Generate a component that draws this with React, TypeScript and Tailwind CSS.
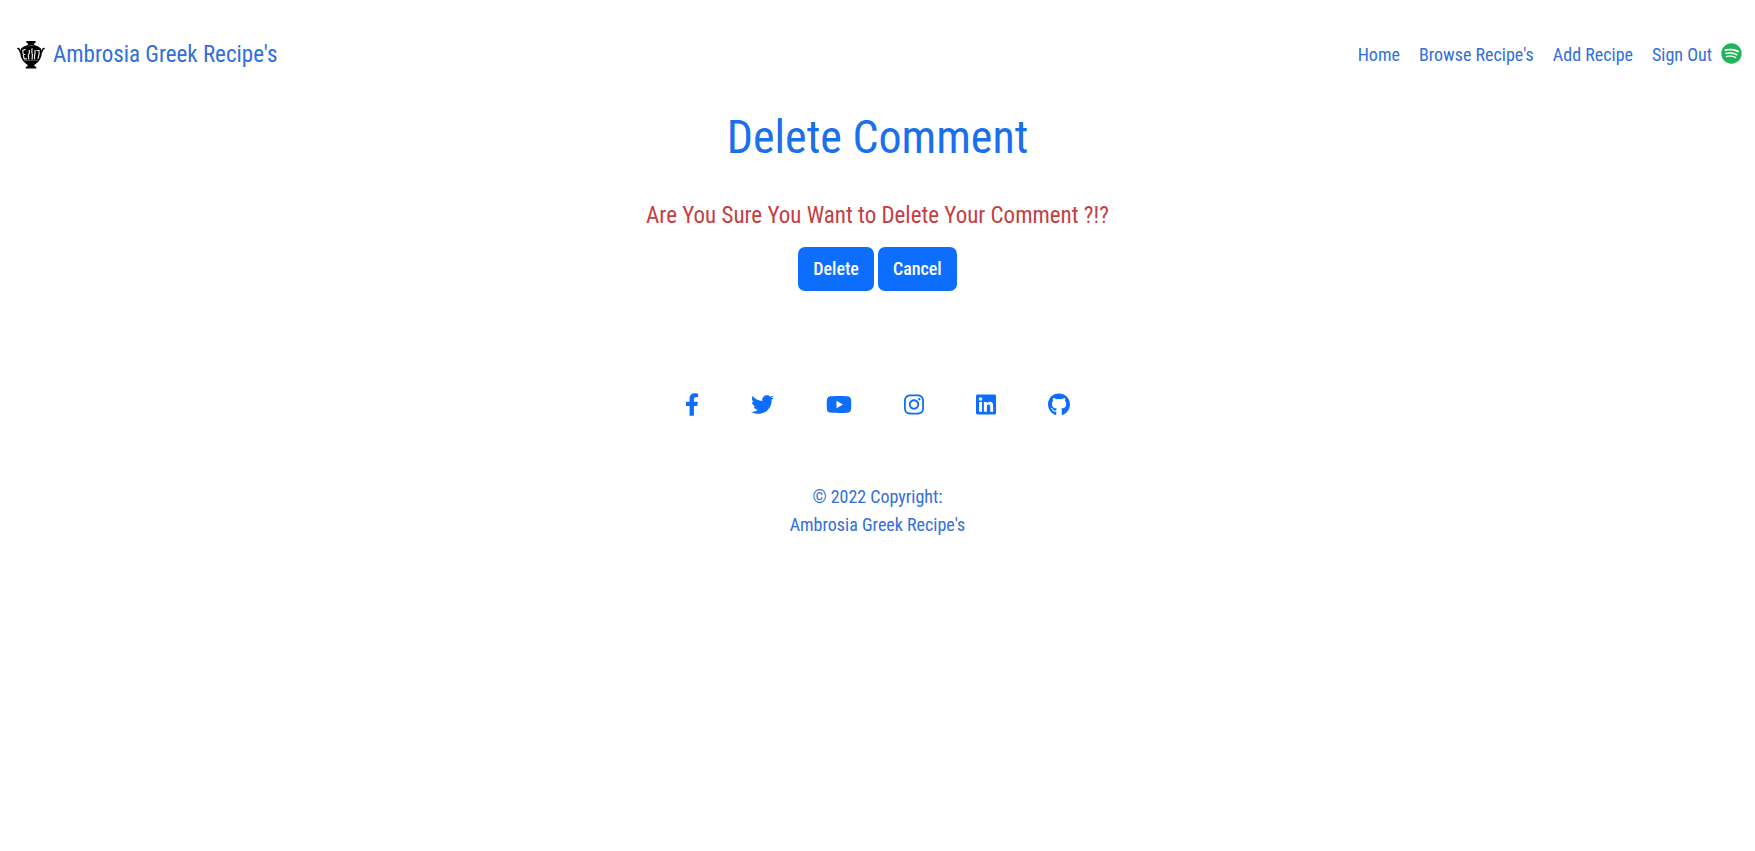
import type { IconType } from 'react-icons';
import {
  FaFacebookF,
  FaGithub,
  FaInstagram,
  FaLinkedin,
  FaSpotify,
  FaTwitter,
  FaYoutube,
} from 'react-icons/fa';

const navLinks = ['Home', "Browse Recipe's", 'Add Recipe'];

const socialLinks: { name: string; Icon: IconType; width: string }[] = [
  { name: 'Facebook', Icon: FaFacebookF, width: 'w-[14px]' },
  { name: 'Twitter', Icon: FaTwitter, width: 'w-[23px]' },
  { name: 'YouTube', Icon: FaYoutube, width: 'w-[26px]' },
  { name: 'Instagram', Icon: FaInstagram, width: 'w-[20px]' },
  { name: 'LinkedIn', Icon: FaLinkedin, width: 'w-[20px]' },
  { name: 'GitHub', Icon: FaGithub, width: 'w-[22px]' },
];

function AmphoraLogo() {
  return (
    <svg viewBox="0 1 28 28" className="size-7" aria-hidden="true">
      {/* handles */}
      <path
        fill="none"
        stroke="#000"
        strokeWidth="1.5"
        strokeLinecap="round"
        d="M.9 8.600c.9-.2 1.300.5 1.500 1.400.3 1.600 1.300 2.700 3.200 3.200M27.100 8.600c-.9-.2-1.300.5-1.500 1.400-.3 1.600-1.300 2.700-3.200 3.200"
      />
      {/* lip, neck, body and foot */}
      <path
        fill="#000"
        d="M9.300 1h9.400v1.600l-1.600.9v1.200c1.200 1 4.600 1.500 6.300 3.400 1.400 1.600 1.500 4.200 1.200 6.500-.4 3.600-2.200 6.500-4.600 8.400-1.100.9-2.400 1.500-2.700 2.200v.8l2 1v1.500H8.700v-1.500l2-1v-.8c-.3-.7-1.600-1.300-2.700-2.200-2.400-1.900-4.200-4.800-4.600-8.400-.3-2.300-.2-4.900 1.200-6.500 1.700-1.900 5.100-2.400 6.300-3.400V3.500l-1.600-.9z"
      />
      {/* painted figures */}
      <path
        fill="none"
        stroke="#e8e8e8"
        strokeWidth="1.200"
        d="M8.600 9.300 5.800 10.500l.3 3.500M6 14.500h2.300M6.200 15l1 3.800h2.800M12.300 10v3l-.9 2 .4 4.500M15.100 8.300l-.3 3.500.6 3-.3 4.700M18 10v3.500l-.6 2.500.3 3.200M19.500 10.500h2.500l.2 3-1.200 5.300"
      />
      <path stroke="#aaa" strokeWidth="0.500" d="M7 20.300h14M11.500 5.300h5" />
    </svg>
  );
}

export default function App() {
  return (
    <div className="bg-white font-['Roboto_Condensed',Roboto,sans-serif] text-lg leading-7 text-[#316fdc]">
      <header className="flex items-center justify-between px-[13px] pt-[37px]">
        <a href="#" className="flex items-center gap-2 pl-1 text-[23px] leading-9">
          <AmphoraLogo />
          Ambrosia Greek Recipe's
        </a>
        <nav className="flex items-center gap-[19px]">
          {navLinks.map((label) => (
            <a key={label} href="#">
              {label}
            </a>
          ))}
          <div className="flex items-center gap-[9px]">
            <a href="#">Sign Out</a>
            <a href="#" aria-label="Spotify" className="pb-1">
              <FaSpotify className="size-[21px] text-[#1fb457]" />
            </a>
          </div>
        </nav>
      </header>

      <main className="flex flex-col items-center pt-9 text-center">
        <h1 className="text-[46px] leading-14 text-[#1a6fec]">Delete Comment</h1>
        <p className="pt-[33px] text-[23px] leading-9 text-[#c63d42]">
          Are You Sure You Want to Delete Your Comment ?!?
        </p>
        <div className="flex gap-1 pt-[13px]">
          <button
            type="button"
            className="h-11 rounded-[7px] bg-[#0d6efd] px-[15px] font-medium text-white"
          >
            Delete
          </button>
          <button
            type="button"
            className="h-11 rounded-[7px] bg-[#0d6efd] px-[15px] font-medium text-white"
          >
            Cancel
          </button>
        </div>
      </main>

      <footer className="flex flex-col items-center pt-[102px] text-center">
        <div className="flex items-center gap-[52px] text-[#0d6efd]">
          {socialLinks.map(({ name, Icon, width }) => (
            <a key={name} href="#" aria-label={name}>
              <Icon className={`h-[23px] ${width}`} />
            </a>
          ))}
        </div>
        <div className="pt-[67px]">
          <p>© 2022 Copyright:</p>
          <a href="#" className="block">
            Ambrosia Greek Recipe's
          </a>
        </div>
      </footer>
    </div>
  );
}
